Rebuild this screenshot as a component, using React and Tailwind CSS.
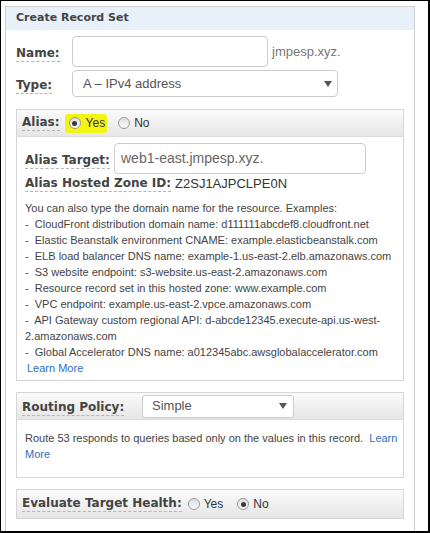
import React from "react";

const labelFont = { fontFamily: '"DejaVu Sans", Verdana, sans-serif' };
const bodyFont = { fontFamily: '"Liberation Sans", Arial, sans-serif' };

// dotted-underlined bold label, console style
function Label({ children, className = "" }) {
  return (
    <span
      style={labelFont}
      className={`inline-block text-[12px] font-bold leading-[15px] text-[#444] border-b border-dashed border-[#b5b5b5] ${className}`}
    >
      {children}
    </span>
  );
}

function Radio({ checked }) {
  return (
    <span className="flex h-[12px] w-[12px] shrink-0 items-center justify-center rounded-full border border-[#9a9a9a] bg-gradient-to-b from-[#dedede] to-[#fbfbfb]">
      {checked && <span className="h-[5px] w-[5px] rounded-full bg-[#3a3a3a]" />}
    </span>
  );
}

function Arrow() {
  return <span className="h-0 w-0 border-l-[4px] border-r-[4px] border-t-[6px] border-l-transparent border-r-transparent border-t-[#555]" />;
}

const examples = [
  "CloudFront distribution domain name: d111111abcdef8.cloudfront.net",
  "Elastic Beanstalk environment CNAME: example.elasticbeanstalk.com",
  "ELB load balancer DNS name: example-1.us-east-2.elb.amazonaws.com",
  "S3 website endpoint: s3-website.us-east-2.amazonaws.com",
  "Resource record set in this hosted zone: www.example.com",
  "VPC endpoint: example.us-east-2.vpce.amazonaws.com",
];

export default function App() {
  return (
    <div className="h-[533px] w-[430px] overflow-hidden border-b-2 border-l border-r-2 border-t border-black bg-white pl-[4px] pt-[5px]">
      <div className="h-[540px] w-[410px] border border-[#cfcfcf] bg-white" style={bodyFont}>
        {/* panel title */}
        <div className="flex h-[23px] items-center bg-[#e8f0fa] pl-[10px]">
          <span style={labelFont} className="text-[11px] font-bold text-[#444]">Create Record Set</span>
        </div>

        <div className="px-[10px] pt-[6px]">
          {/* Name */}
          <div className="flex h-[31px] items-center">
            <div className="w-[56px]"><Label>Name:</Label></div>
            <div className="h-[31px] w-[196px] rounded-[4px] border border-[#cccccc] bg-white" />
            <span className="ml-[4px] text-[13px] text-[#777]">jmpesp.xyz.</span>
          </div>

          {/* Type */}
          <div className="mt-[3px] flex h-[27px] items-center">
            <div className="w-[56px]"><Label>Type:</Label></div>
            <div className="flex h-[27px] w-[266px] items-center justify-between rounded-[4px] border border-[#cccccc] bg-white pl-[10px] pr-[5px]">
              <span className="text-[13px] text-[#555]">A – IPv4 address</span>
              <Arrow />
            </div>
          </div>

          {/* Alias */}
          <div className="mt-[12px] border border-[#d6d6d6]">
            <div className="flex h-[27px] items-center border-b border-[#dcdcdc] bg-gradient-to-b from-[#fbfbfb] to-[#e6e6e6] pl-[5px]">
              <Label>Alias:</Label>
              <span className="ml-[5px] flex h-[19px] items-center rounded-[3px] bg-[#f2f514] pl-[4px] pr-[2px]">
                <Radio checked />
                <span className="ml-[5px] text-[12px] text-[#333]">Yes</span>
              </span>
              <span className="ml-[11px] flex items-center">
                <Radio />
                <span className="ml-[4px] text-[12px] text-[#333]">No</span>
              </span>
            </div>

            <div className="pb-[4px] pl-[8px] pr-[6px]">
              <div className="mt-[6px] flex h-[31px] items-center">
                <div className="w-[89px]"><Label>Alias Target:</Label></div>
                <div className="flex h-[31px] w-[252px] items-center rounded-[4px] border border-[#cccccc] bg-white pl-[6px]">
                  <span className="text-[14px] text-[#666]">web1-east.jmpesp.xyz.</span>
                </div>
              </div>

              <div className="mt-[2px] flex items-start">
                <Label>Alias Hosted Zone ID:</Label>
                <span className="ml-[4px] text-[13px] leading-[16px] text-[#333]">Z2SJ1AJPCLPE0N</span>
              </div>

              <div className="mt-[8px] whitespace-nowrap text-[11px] leading-[16px] text-[#444]">
                <div>You can also type the domain name for the resource. Examples:</div>
                {examples.map((e) => (
                  <div key={e}>-&nbsp; {e}</div>
                ))}
                <div>-&nbsp; API Gateway custom regional API: d-abcde12345.execute-api.us-west-</div>
                <div>2.amazonaws.com</div>
                <div>-&nbsp; Global Accelerator DNS name: a012345abc.awsglobalaccelerator.com</div>
                <div className="ml-[2px] text-[#2c6fbf]">Learn More</div>
              </div>
            </div>
          </div>

          {/* Routing policy */}
          <div className="mt-[11px] border border-[#d6d6d6]">
            <div className="flex h-[27px] items-center border-b border-[#dcdcdc] bg-gradient-to-b from-[#fbfbfb] to-[#e6e6e6] pl-[5px]">
              <div className="w-[120px]"><Label>Routing Policy:</Label></div>
              <div className="flex h-[23px] w-[152px] items-center justify-between rounded-[3px] border border-[#cccccc] bg-white pl-[9px] pr-[6px]">
                <span className="text-[13px] text-[#555]">Simple</span>
                <Arrow />
              </div>
            </div>
            <div className="whitespace-nowrap pb-[15px] pl-[8px] pt-[10px] text-[11px] leading-[16px] text-[#444]">
              <div>
                Route 53 responds to queries based only on the values in this record.&nbsp; <span className="text-[#2c6fbf]">Learn</span>
              </div>
              <div className="text-[#2c6fbf]">More</div>
            </div>
          </div>

          {/* Evaluate target health */}
          <div className="mt-[11px] flex h-[30px] items-center border border-[#d6d6d6] bg-gradient-to-b from-[#fbfbfb] to-[#e6e6e6] pl-[5px]">
            <Label>Evaluate Target Health:</Label>
            <span className="ml-[6px] flex items-center">
              <Radio />
              <span className="ml-[4px] text-[12px] text-[#333]">Yes</span>
            </span>
            <span className="ml-[14px] flex items-center">
              <Radio checked />
              <span className="ml-[4px] text-[12px] text-[#333]">No</span>
            </span>
          </div>
        </div>
      </div>
    </div>
  );
}
